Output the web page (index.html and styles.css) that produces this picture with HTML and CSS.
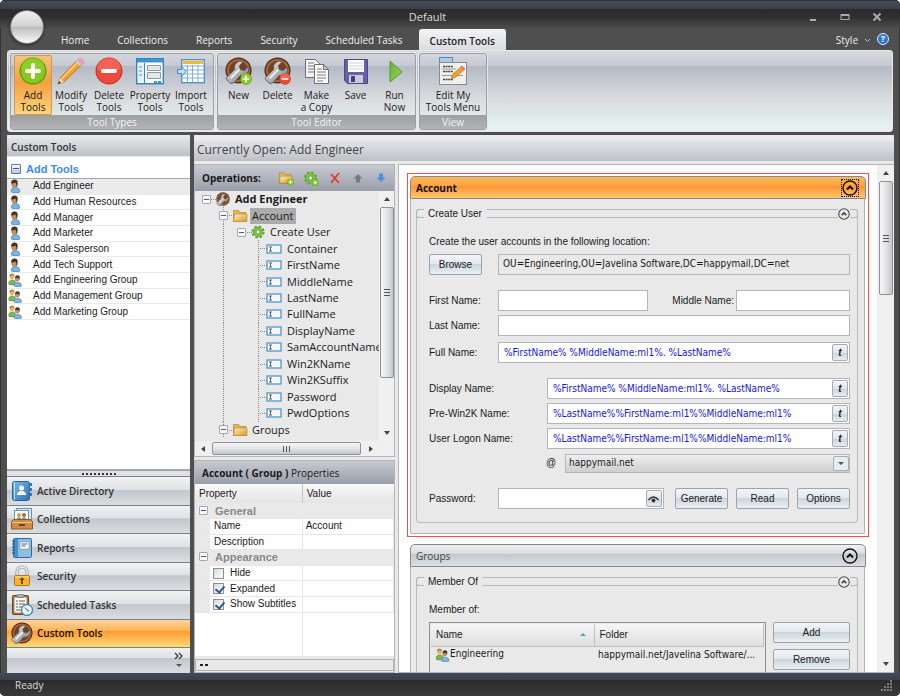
FILE: index.html
```
<!DOCTYPE html>
<html lang="en">
<head>
  <meta charset="UTF-8">
  <meta name="viewport" content="width=device-width, initial-scale=1.0">
  <title>Default</title>
  <link rel="stylesheet" href="styles.css">
</head>
<body>
  <!-- icon sprite -->
  <svg class="sprite" width="0" height="0" aria-hidden="true">
    <defs>
      <linearGradient id="gFolder" x1="0" y1="0" x2="1" y2="1"><stop offset="0" stop-color="#fff0b8"/><stop offset="1" stop-color="#d99a2b"/></linearGradient>
      <linearGradient id="gSteel" x1="0" y1="0" x2="1" y2="1"><stop offset="0" stop-color="#f6f6f6"/><stop offset="1" stop-color="#6f747a"/></linearGradient>
      <linearGradient id="gBook" x1="0" y1="0" x2="1" y2="1"><stop offset="0" stop-color="#7db9e8"/><stop offset="1" stop-color="#2f72b4"/></linearGradient>
      <linearGradient id="gPlay" x1="0" y1="0" x2="1" y2="1"><stop offset="0" stop-color="#5fb33a"/><stop offset="1" stop-color="#a5d24c"/></linearGradient>
      <symbol id="plus" viewBox="0 0 28 28">
        <circle cx="14" cy="14" r="13.5" fill="#4f9a10"/><circle cx="14" cy="14" r="12.3" fill="#86c81e"/>
        <path d="M2 12a12 12 0 0 1 24 0q-12 5-24 0z" fill="#9ad430" opacity=".5"/>
        <path d="M14 8v12M8 14h12" stroke="#fff" stroke-width="4" stroke-linecap="round"/>
      </symbol>
      <symbol id="minus" viewBox="0 0 28 28">
        <circle cx="14" cy="14" r="13.5" fill="#c8372c"/><circle cx="14" cy="14" r="12.3" fill="#ee4a3c"/>
        <path d="M2 12a12 12 0 0 1 24 0q-12 5-24 0z" fill="#f77a6c" opacity=".5"/>
        <path d="M8 14h12" stroke="#fff" stroke-width="4" stroke-linecap="round"/>
      </symbol>
      <symbol id="pencil" viewBox="0 0 28 28">
        <path d="M1 27l2-6L21 2.500q3-2 5 1t0 3L7 25z" fill="#f0a030" stroke="#b8701a" stroke-width=".8"/>
        <path d="M4.500 22L21 5" stroke="#ffd27a" stroke-width="1.600"/>
        <path d="M20 3.500l1.500-2q3-1.500 5 1t-.5 4.500l-2 1z" fill="#e3a5b8"/>
        <path d="M18.500 5l1.500-1.500 4.500 4-1.500 1.500z" fill="#c9ced6"/>
        <path d="M1 27l2-6 4 4z" fill="#f2d9ae"/><path d="M1 27l1-3 2 2z" fill="#333"/>
      </symbol>
      <symbol id="props" viewBox="0 0 28 28">
        <rect x=".7" y="1.700" width="26.600" height="25" fill="#fff" stroke="#2f86c4" stroke-width="1.400"/>
        <rect x="1" y="2" width="26" height="3.500" fill="#3f95d2"/>
        <rect x="2" y="7" width="6" height="18" fill="#e6f1f8"/><path d="M8.500 6v20" stroke="#2f86c4"/>
        <path d="M3 10h3M3 14h3M3 18h3" stroke="#3f95d2"/>
        <path d="M11.500 8.500h13v5h-13zM11.500 15.500h13v6h-13z" fill="#e4e6e9" stroke="#8d99a5"/>
        <path d="M18 24h3v2h-3zM22 24h3v2h-3z" fill="#3f95d2"/>
      </symbol>
      <symbol id="import" viewBox="0 0 28 28">
        <rect x="4.700" y="2.700" width="22.600" height="23" fill="#fff" stroke="#4a97cc" stroke-width="1.400"/>
        <rect x="6" y="4" width="20" height="3" fill="#f6b733"/>
        <path d="M5 9h22M5 13h22M5 17h22M5 21h22M10.500 8v17M15.500 8v17M21 8v17" stroke="#7fb2d6" stroke-width="1"/>
        <path d="M.5 12.500h4V9.500l4.500 5-4.500 5v-3h-4z" fill="#bde0f5" stroke="#3b8cc6"/>
      </symbol>
      <symbol id="wrench" viewBox="0 0 28 28">
        <circle cx="14" cy="14" r="13.500" fill="#5b2e14"/><circle cx="14" cy="14" r="12" fill="#a8683a"/><circle cx="14" cy="14" r="10" fill="#74401f"/>
        <path d="M3 25l-2-3 9-9q-1-5 2-7 3-3 7-1l-4 4 1 4 4 1 4-4q2 5-2 8-2 2-6 1l-7 8q-3 2-6-2z" fill="url(#gSteel)" stroke="#4b4f54" stroke-width=".8"/>
        <path d="M6 22l9-9" stroke="#fff" stroke-width="1.500"/>
      </symbol>
      <symbol id="tool-new" viewBox="0 0 28 28"><use href="#wrench" width="27" height="27"/><use href="#plus" x="15" y="16" width="12" height="12"/></symbol>
      <symbol id="tool-del" viewBox="0 0 28 28"><use href="#wrench" width="27" height="27"/><use href="#minus" x="15" y="16" width="12" height="12"/></symbol>
      <symbol id="copy" viewBox="0 0 28 28">
        <path d="M2.500 2.500h10l5 5v13h-15z" fill="#f4f4f4" stroke="#6f6f6f"/>
        <path d="M5 6h6M5 9h9M5 12h9M5 15h9" stroke="#777"/>
        <path d="M11.500 7.500h9l5 5v14h-14z" fill="#fdfdfd" stroke="#6f6f6f"/><path d="M20.500 7.500v5h5z" fill="#ccc" stroke="#6f6f6f"/>
        <path d="M14 12h5M14 15h9M14 18h9M14 21h9M14 24h6" stroke="#777"/>
      </symbol>
      <symbol id="save" viewBox="0 0 28 28">
        <path d="M2.500 2.500h23v24h-20l-3-3z" fill="#6660ae" stroke="#4b4690"/>
        <rect x="6" y="3" width="16" height="12" fill="#fff"/><path d="M7 6h14M7 9h14M7 12h14" stroke="#cfd0dc"/>
        <rect x="7" y="18" width="14" height="8" fill="#c9cbd6"/><rect x="9" y="19" width="4" height="6" fill="#454079"/>
      </symbol>
      <symbol id="run" viewBox="0 0 28 28"><path d="M9 4l12 11L9 25z" fill="url(#gPlay)" stroke="#4f9a2e"/></symbol>
      <symbol id="editmenu" viewBox="0 0 28 28">
        <rect x=".5" y=".5" width="13" height="5" fill="#a9cfe6" stroke="#4d8fb8"/>
        <rect x=".5" y="5.500" width="27" height="22" fill="#efefec" stroke="#8a8a8a"/>
        <path d="M4 9.500h10M4 14.500h10M4 22.500h10" stroke="#444" stroke-width="1.400" stroke-dasharray="2 .6"/><path d="M3 12h14M3 18.500h21" stroke="#999"/>
        <path d="M12 22l2-5 9-8 3 3-9 8z" fill="#f0a030" stroke="#b8701a" stroke-width=".7"/><path d="M21 10.500l2-2 3.500 3-2 2z" fill="#e77d7d"/>
      </symbol>
      <symbol id="user" viewBox="0 0 14 16">
        <path d="M3 15q-1-5 4-5.500 6 .5 5.500 5.500-5 2-9.500 0z" fill="#79b5e0" stroke="#3d7fb5" stroke-width=".7"/>
        <ellipse cx="6" cy="6" rx="3.200" ry="3.900" fill="#c98d55"/>
        <path d="M2.500 5q0-4.500 4-4.500T10 5q0 3-1.500 4.500.5-4-1-5.500-2 1-5 1z" fill="#3a3330"/>
      </symbol>
      <symbol id="group" viewBox="0 0 16 16">
        <path d="M1 13q-1-5 4-5 4 0 4 5-4 1.500-8 0z" fill="#7db84e" stroke="#4b8a2a" stroke-width=".6"/>
        <circle cx="4.500" cy="4.500" r="2.800" fill="#e3b57e"/><path d="M1.500 4q0-3.500 3-3.500t3 3q-3-1-6 .5z" fill="#b98a3c"/>
        <path d="M7 15q-.5-4.500 4-4.500t4.500 4.500q-4 1.500-8.500 0z" fill="#79b5e0" stroke="#3d7fb5" stroke-width=".6"/>
        <circle cx="10.500" cy="7" r="2.600" fill="#c98d55"/><path d="M8 6q0-3.500 3-3.500t2.500 5q-1-3-5.500-1.500z" fill="#3a3330"/>
      </symbol>
      <symbol id="book" viewBox="0 0 22 22">
        <rect x="1.500" y="1.500" width="17" height="19" rx="2" fill="url(#gBook)" stroke="#2a639c"/><path d="M3.500 2v18" stroke="#b4d6ef"/>
        <path d="M19 3h2v3h-2zM19 8h2v3h-2zM19 13h2v3h-2z" fill="#3b79b5"/>
        <circle cx="10.500" cy="8" r="2.500" fill="#fff"/><path d="M6 15q0-4 4.500-4t4.500 4z" fill="#fff"/>
      </symbol>
      <symbol id="drawer" viewBox="0 0 22 22">
        <rect x="5.500" y=".5" width="15" height="13" fill="#dbe8f2" stroke="#6a91b0"/><rect x="3.500" y="2.500" width="14" height="12" fill="#fff" stroke="#6a91b0"/>
        <circle cx="8" cy="7" r="2" fill="#cf9a58"/><circle cx="13" cy="7" r="2" fill="#a06c3a"/><path d="M5 13q1-4 3-4t3 4z" fill="#6cae45"/><path d="M10 13q1-4 3-4t3 4z" fill="#5f9fd0"/>
        <path d="M.5 13.500l2-2h17l2 2v7.500H.5z" fill="#d18b45" stroke="#8f5a22"/><path d="M1 14.500h20" stroke="#f2c288"/><rect x="8" y="16" width="6" height="2" fill="#6f4315"/>
      </symbol>
      <symbol id="report" viewBox="0 0 22 22">
        <rect x="2.500" y="1.500" width="18" height="19" rx="1" fill="#8fbfe0" stroke="#2f6a9e"/><rect x="3" y="2" width="4" height="18" fill="#4a8fc6"/>
        <path d="M1 4h3M1 7h3M1 10h3M1 13h3M1 16h3" stroke="#24527d"/>
        <rect x="9" y="5" width="9" height="7" fill="#fff" stroke="#6a91b0" stroke-width=".6"/><path d="M10.500 7h6M10.500 9h4" stroke="#567"/>
      </symbol>
      <symbol id="lock" viewBox="0 0 22 22">
        <path d="M6 11V7q0-5 5-5t5 5v4" fill="none" stroke="#8c9095" stroke-width="3"/><path d="M6 11V7q0-5 5-5t5 5v4" fill="none" stroke="#dfe2e5" stroke-width="1.800"/>
        <rect x="3.500" y="10.500" width="15" height="10" rx="1" fill="#f7b32b" stroke="#b8761a"/><path d="M4 12h14" stroke="#ffe08a"/>
        <path d="M11 12l3 3h-2v4h-2v-4H8z" fill="#7a4a10"/>
      </symbol>
      <symbol id="clip" viewBox="0 0 22 22">
        <rect x="1.500" y="1.500" width="16" height="19" rx="1" fill="#a87443" stroke="#6d4520"/><rect x="3.500" y="3.500" width="12" height="15" fill="#fff"/>
        <rect x="6" y=".5" width="7" height="3" rx="1" fill="#aab0b6" stroke="#666" stroke-width=".6"/>
        <path d="M5 7h2M8 7h6M5 10h2M8 10h6M5 13h2M8 13h4M5 16h5" stroke="#555"/>
        <circle cx="16" cy="16" r="5.500" fill="#eaf4fb" stroke="#3d85bd" stroke-width="1.300"/><path d="M14 13.500l2 2.500 2 1" stroke="#555" fill="none"/>
      </symbol>
      <symbol id="folder" viewBox="0 0 16 14">
        <path d="M1.500 12.500v-11h5l1.500 2h6v9z" fill="#e9b64d" stroke="#a97820" stroke-width=".6"/><path d="M1.500 12.500l1-7.500h12.500v7.500z" fill="url(#gFolder)" stroke="#b5842b" stroke-width=".6"/>
      </symbol>
      <symbol id="folder-add" viewBox="0 0 16 14"><use href="#folder" width="15" height="13"/><use href="#plus" x="9" y="7" width="7" height="7"/></symbol>
      <symbol id="gear" viewBox="0 0 16 16">
        <circle cx="8" cy="8" r="6" fill="none" stroke="#5fa532" stroke-width="3" stroke-dasharray="2.600 2.110"/>
        <circle cx="8" cy="8" r="5.500" fill="#7cc142" stroke="#5fa532" stroke-width=".7"/><circle cx="8" cy="8" r="2.300" fill="#eee" stroke="#4e962a" stroke-width=".7"/>
      </symbol>
      <symbol id="gear-add" viewBox="0 0 16 16"><use href="#gear" width="15" height="15"/><use href="#plus" x="9" y="9" width="7" height="7"/></symbol>
      <symbol id="cross" viewBox="0 0 12 12"><path d="M2 2l8 9M10 1L2 11" stroke="#e8382a" stroke-width="1.800" fill="none"/></symbol>
      <symbol id="up" viewBox="0 0 12 12"><path d="M6 2l4.500 4.500h-2.500v4h-4v-4H1.500z" fill="#777b80"/></symbol>
      <symbol id="down" viewBox="0 0 12 12"><path d="M6 10L1.500 5.500h2.500v-4h4v4h2.500z" fill="#4f8fe0"/></symbol>
      <symbol id="field" viewBox="0 0 16 10"><rect x="1" y="1" width="14" height="8" fill="#f6f6f6" stroke="#4b9bd0" stroke-width="1.300"/><path d="M3 3h3M3 7h3M4.500 3v4" stroke="#555" stroke-width=".9"/></symbol>
      <symbol id="collapse" viewBox="0 0 16 16"><circle cx="8" cy="8" r="7" fill="none" stroke="currentColor" stroke-width="1.400"/><path d="M5 9.500l3-3 3 3" fill="none" stroke="currentColor" stroke-width="2"/></symbol>
      <symbol id="eye" viewBox="0 0 12 10"><path d="M1 6q5-6 10 0" fill="none" stroke="#333" stroke-width="1.400"/><circle cx="6" cy="6.500" r="1.900" fill="#333"/></symbol>
    </defs>
  </svg>

  <div class="window">
    <header class="titlebar">
      <h1>Default</h1>
      <div class="winbtns">
        <button aria-label="Minimize"><svg width="12" height="12"><path d="M3 9h6" stroke="#a9adb3" stroke-width="2"/></svg></button>
        <button aria-label="Maximize"><svg width="12" height="12"><rect x="2" y="3.500" width="8" height="5" fill="none" stroke="#a9adb3"/><path d="M2 4h8" stroke="#a9adb3" stroke-width="2"/></svg></button>
        <button aria-label="Close"><svg width="12" height="12"><path d="M2.500 2.500l7 7M9.500 2.500l-7 7" stroke="#a9adb3" stroke-width="2"/></svg></button>
      </div>
    </header>
    <button class="orb" aria-label="Application menu"></button>

    <nav class="tabs">
      <a href="#">Home</a>
      <a href="#">Collections</a>
      <a href="#">Reports</a>
      <a href="#">Security</a>
      <a href="#">Scheduled Tasks</a>
      <a href="#" class="active">Custom Tools</a>
      <div class="tabs-right">
        <button class="style-btn">Style
          <svg width="7" height="5"><path d="M1 1l2.500 2.500L6 1" fill="none" stroke="#bbb"/></svg>
        </button>
        <button class="help" aria-label="Help">?</button>
      </div>
    </nav>

    <section class="ribbon">
      <div class="group">
        <div class="group-btns">
          <button class="rb on"><svg><use href="#plus"/></svg><span>Add<br>Tools</span></button>
          <button class="rb"><svg><use href="#pencil"/></svg><span>Modify<br>Tools</span></button>
          <button class="rb"><svg><use href="#minus"/></svg><span>Delete<br>Tools</span></button>
          <button class="rb wide"><svg><use href="#props"/></svg><span>Property<br>Tools</span></button>
          <button class="rb"><svg><use href="#import"/></svg><span>Import<br>Tools</span></button>
        </div>
        <div class="group-name">Tool Types</div>
      </div>
      <div class="group">
        <div class="group-btns">
          <button class="rb"><svg><use href="#tool-new"/></svg><span>New</span></button>
          <button class="rb"><svg><use href="#tool-del"/></svg><span>Delete</span></button>
          <button class="rb"><svg><use href="#copy"/></svg><span>Make<br>a Copy</span></button>
          <button class="rb"><svg><use href="#save"/></svg><span>Save</span></button>
          <button class="rb"><svg><use href="#run"/></svg><span>Run<br>Now</span></button>
        </div>
        <div class="group-name">Tool Editor</div>
      </div>
      <div class="group">
        <div class="group-btns">
          <button class="rb widest"><svg><use href="#editmenu"/></svg><span>Edit My<br>Tools Menu</span></button>
        </div>
        <div class="group-name">View</div>
      </div>
    </section>

    <main class="main">
      <aside class="sidebar">
        <h2 class="side-title">Custom Tools</h2>
        <div class="side-group"><button class="box blue" aria-label="Collapse"></button>Add Tools</div>
        <ul class="tools">
          <li class="sel"><svg><use href="#user"/></svg><a href="#">Add Engineer</a></li>
          <li><svg><use href="#user"/></svg><a href="#">Add Human Resources</a></li>
          <li><svg><use href="#user"/></svg><a href="#">Add Manager</a></li>
          <li><svg><use href="#user"/></svg><a href="#">Add Marketer</a></li>
          <li><svg><use href="#user"/></svg><a href="#">Add Salesperson</a></li>
          <li><svg><use href="#user"/></svg><a href="#">Add Tech Support</a></li>
          <li><svg><use href="#group"/></svg><a href="#">Add Engineering Group</a></li>
          <li><svg><use href="#group"/></svg><a href="#">Add Management Group</a></li>
          <li><svg><use href="#group"/></svg><a href="#">Add Marketing Group</a></li>
        </ul>
        <div class="grip"><span></span></div>
        <nav class="sections">
          <a href="#"><svg><use href="#book"/></svg>Active Directory</a>
          <a href="#"><svg><use href="#drawer"/></svg>Collections</a>
          <a href="#"><svg><use href="#report"/></svg>Reports</a>
          <a href="#"><svg><use href="#lock"/></svg>Security</a>
          <a href="#"><svg><use href="#clip"/></svg>Scheduled Tasks</a>
          <a href="#" class="active"><svg><use href="#wrench"/></svg>Custom Tools</a>
        </nav>
        <div class="side-foot">
          <svg width="10" height="16"><path d="M1 1l3 3-3 3M5 1l3 3-3 3" fill="none" stroke="#333" stroke-width="1.200"/><path d="M2 12h6l-3 3z" fill="#555"/></svg>
        </div>
      </aside>

      <section class="content">
        <h2 class="open-title">Currently Open: Add Engineer</h2>
        <div class="split">
          <div class="left-col">
            <div class="pane">
              <div class="pane-head ops">
                <b>Operations:</b>
                <button aria-label="Add folder"><svg><use href="#folder-add"/></svg></button>
                <button aria-label="Add operation"><svg><use href="#gear-add"/></svg></button>
                <button aria-label="Delete"><svg><use href="#cross"/></svg></button>
                <button aria-label="Move up"><svg><use href="#up"/></svg></button>
                <button aria-label="Move down"><svg><use href="#down"/></svg></button>
              </div>
              <div class="tree-wrap">
                <ul class="tree">
                  <li class="d0"><i class="box"></i><svg><use href="#wrench"/></svg><b>Add Engineer</b></li>
                  <li class="d1"><i class="box"></i><svg><use href="#folder"/></svg><span class="picked">Account</span></li>
                  <li class="d2"><i class="box"></i><svg><use href="#gear"/></svg><span>Create User</span></li>
                  <li class="d3"><svg><use href="#field"/></svg><span>Container</span></li>
                  <li class="d3"><svg><use href="#field"/></svg><span>FirstName</span></li>
                  <li class="d3"><svg><use href="#field"/></svg><span>MiddleName</span></li>
                  <li class="d3"><svg><use href="#field"/></svg><span>LastName</span></li>
                  <li class="d3"><svg><use href="#field"/></svg><span>FullName</span></li>
                  <li class="d3"><svg><use href="#field"/></svg><span>DisplayName</span></li>
                  <li class="d3"><svg><use href="#field"/></svg><span>SamAccountName</span></li>
                  <li class="d3"><svg><use href="#field"/></svg><span>Win2KName</span></li>
                  <li class="d3"><svg><use href="#field"/></svg><span>Win2KSuffix</span></li>
                  <li class="d3"><svg><use href="#field"/></svg><span>Password</span></li>
                  <li class="d3"><svg><use href="#field"/></svg><span>PwdOptions</span></li>
                  <li class="d1"><i class="box"></i><svg><use href="#folder"/></svg><span>Groups</span></li>
                </ul>
                <div class="vbar tree-vbar"><i class="arr n"></i><i class="thumb"></i><i class="arr s"></i></div>
              </div>
              <div class="hbar"><i class="arr w"></i><i class="thumb"></i><i class="arr e"></i></div>
            </div>

            <div class="pane props">
              <div class="pane-head"><span><b>Account ( Group )</b> Properties</span></div>
              <table class="prop-table">
                <thead><tr><th>Property</th><th>Value</th></tr></thead>
                <tbody>
                  <tr class="cat"><td colspan="2"><i class="box"></i>General</td></tr>
                  <tr><td>Name</td><td>Account</td></tr>
                  <tr><td>Description</td><td></td></tr>
                  <tr class="cat"><td colspan="2"><i class="box"></i>Appearance</td></tr>
                  <tr><td class="chk"><label><input type="checkbox">Hide</label></td><td></td></tr>
                  <tr><td class="chk"><label><input type="checkbox" checked>Expanded</label></td><td></td></tr>
                  <tr><td class="chk"><label><input type="checkbox" checked>Show Subtitles</label></td><td></td></tr>
                </tbody>
              </table>
              <div class="prop-rest"></div>
              <div class="prop-hint"><i></i><i></i></div>
            </div>
          </div>

          <div class="editor">
            <div class="editor-scroll">
              <div class="current">
                <article class="card">
                  <h3 class="card-head hot">Account<button aria-label="Collapse Account"><svg><use href="#collapse"/></svg></button></h3>
                  <div class="card-body">
                    <form class="frame">
                      <div class="legend"><i class="cap l"></i><span>Create User</span><i class="rule"></i><button type="button" aria-label="Collapse"><svg><use href="#collapse"/></svg></button><i class="cap r"></i></div>
                      <p class="note">Create the user accounts in the following location:</p>
                      <div class="row end">
                        <div class="lab"><button type="button" class="btn">Browse</button></div>
                        <input class="inp ro" type="text" aria-label="Location" readonly value="OU=Engineering,OU=Javelina Software,DC=happymail,DC=net">
                      </div>
                      <div class="row">
                        <label class="lab" for="first">First Name:</label>
                        <input class="inp" id="first" type="text">
                        <label class="mid" for="middle">Middle Name:</label>
                        <input class="inp short" id="middle" type="text">
                      </div>
                      <div class="row">
                        <label class="lab" for="last">Last Name:</label>
                        <input class="inp" id="last" type="text">
                      </div>
                      <div class="row end">
                        <label class="lab" for="full">Full Name:</label>
                        <div class="inp combo"><input id="full" type="text" value="%FirstName% %MiddleName:ml1%. %LastName%"><button type="button">t</button></div>
                      </div>
                      <div class="row">
                        <label class="lab long" for="display">Display Name:</label>
                        <div class="inp combo"><input id="display" type="text" value="%FirstName% %MiddleName:ml1%. %LastName%"><button type="button">t</button></div>
                      </div>
                      <div class="row">
                        <label class="lab long" for="prewin">Pre-Win2K Name:</label>
                        <div class="inp combo"><input id="prewin" type="text" value="%LastName%%FirstName:ml1%%MiddleName:ml1%"><button type="button">t</button></div>
                      </div>
                      <div class="row">
                        <label class="lab long" for="logon">User Logon Name:</label>
                        <div class="inp combo"><input id="logon" type="text" value="%LastName%%FirstName:ml1%%MiddleName:ml1%"><button type="button">t</button></div>
                      </div>
                      <div class="row end domain">
                        <label class="at" for="domain">@</label>
                        <div class="sel-wrap">
                          <select id="domain"><option>happymail.net</option></select>
                          <i class="drop"></i>
                        </div>
                      </div>
                      <div class="row">
                        <label class="lab" for="pwd">Password:</label>
                        <div class="inp combo pwd"><input id="pwd" type="password"><button type="button" aria-label="Show password"><svg><use href="#eye"/></svg></button></div>
                        <div class="btns">
                          <button type="button" class="btn">Generate</button>
                          <button type="button" class="btn">Read</button>
                          <button type="button" class="btn">Options</button>
                        </div>
                      </div>
                    </form>
                  </div>
                </article>
              </div>

              <article class="card groups">
                <h3 class="card-head">Groups<button aria-label="Collapse Groups"><svg><use href="#collapse"/></svg></button></h3>
                <div class="card-body">
                  <div class="frame">
                    <div class="legend"><i class="cap l"></i><span>Member Of</span><i class="rule"></i><button aria-label="Collapse"><svg><use href="#collapse"/></svg></button><i class="cap r"></i></div>
                    <p class="note">Member of:</p>
                    <div class="members">
                      <div class="list">
                        <table>
                          <thead><tr><th>Name<i class="sort"></i></th><th>Folder</th></tr></thead>
                          <tbody><tr><td><svg><use href="#group"/></svg>Engineering</td><td>happymail.net/Javelina Software/...</td></tr></tbody>
                        </table>
                      </div>
                      <div class="list-btns">
                        <button class="btn">Add</button>
                        <button class="btn">Remove</button>
                      </div>
                    </div>
                  </div>
                </div>
              </article>
            </div>
            <div class="vbar editor-vbar"><i class="arr n"></i><i class="thumb"></i><i class="arr s"></i></div>
          </div>
        </div>
      </section>
    </main>

    <footer class="status">Ready
      <svg width="12" height="12"><path d="M10 2h2M7 5h2M10 5h2M4 8h2M7 8h2M10 8h2M1 11h2M4 11h2M7 11h2M10 11h2" stroke="#999" stroke-width="1.500"/></svg>
    </footer>
  </div>
</body>
</html>
```
FILE: styles.css
```
* {
  box-sizing: border-box;
}
body {
  margin: 0;
  background: #fff;
  font-family: "Open Sans", "Noto Sans", sans-serif;
  font-size: 10px;
  line-height: 12px;
  color: #1a1a1a;
}
h1, h2, h3, p, ul {
  margin: 0;
  padding: 0;
  font-size: 10px;
  font-weight: normal;
}
ul {
  list-style: none;
}
a {
  color: inherit;
  text-decoration: none;
}
button {
  padding: 0;
  border: 0;
  background: none;
  font: inherit;
  color: inherit;
}
input, select {
  font: inherit;
  color: inherit;
}
i {
  font-style: normal;
}
svg {
  display: block;
  flex: none;
}
.sprite {
  position: absolute;
}

/* Window frame */
.window {
  position: relative;
  display: flex;
  flex-direction: column;
  height: 100vh;
  overflow: hidden;
  border-radius: 5px;
  background: #4f4f4f;
  box-shadow: inset 0 0 0 1px #333;
}
.titlebar {
  display: flex;
  align-items: center;
  height: 28px;
  padding: 6px 17px 0 0;
  background: linear-gradient(#333 0 1px, #444958 1px, #3b404d 9px, #2b2b2b 9px, #303030 17px, #4b4b4b);
  color: #ddd;
}
.titlebar h1 {
  flex: 1;
  padding-left: 48px;
  text-align: center;
  font-size: 11px;
}
.winbtns {
  display: flex;
  gap: 20px;
}
.orb {
  position: absolute;
  left: 10px;
  top: 10px;
  width: 34px;
  height: 34px;
  border: 1px solid #777;
  border-radius: 50%;
  background: linear-gradient(#f0f0f0, #d2d2d2 47%, #bcbcbc 50%, #fafafa);
  box-shadow: 0 1px 3px #222;
}

/* Tabs */
.tabs {
  display: flex;
  height: 22px;
  padding-left: 47px;
  color: #eee;
}
.tabs a {
  padding: 0 14px;
  line-height: 25px;
}
.tabs .active {
  margin: 1px 0 0 2px;
  padding: 0 11px;
  border-radius: 3px 3px 0 0;
  background: linear-gradient(#f4f4f4, #d9dce0);
  color: #222;
  line-height: 24px;
  font-weight: 600;
}
.tabs-right {
  display: flex;
  align-items: center;
  gap: 6px;
  margin-left: auto;
  padding-right: 11px;
}
.style-btn {
  display: flex;
  align-items: center;
  gap: 6px;
  padding-top: 2px;
}
.help {
  width: 12px;
  height: 12px;
  border: 1px solid #dfe9f5;
  border-radius: 50%;
  background: #2f74d0;
  color: #fff;
  line-height: 10px;
  font-size: 9px;
  font-weight: 700;
}

/* Ribbon */
.ribbon {
  display: flex;
  gap: 3px;
  margin: 0 7px;
  padding: 2px 2px 1px;
  border: 1px solid #e8e8e8;
  border-radius: 3px;
  height: 82px;
  background: linear-gradient(#d8dadd, #c5c9d2 15px, #b3b9c5 15px, #d8dadd 46px, #e7f1f2 76px);
}
.group {
  display: flex;
  flex-direction: column;
  border: 1px solid #9b9fa5;
  border-radius: 3px;
  box-shadow: 0 0 0 1px #e6e8ea;
  overflow: hidden;
}
.group-btns {
  display: flex;
  flex: 1;
  min-height: 0;
  padding: 1px 3px 0;
}
.group-name {
  height: 14px;
  background: linear-gradient(#9d9fa1, #b2b3b4);
  color: #f4f4f4;
  line-height: 14px;
  text-align: center;
}
.rb {
  display: flex;
  flex-direction: column;
  align-items: center;
  justify-content: flex-start;
  gap: 4px;
  width: 38px;
  padding-top: 2px;
  border-radius: 2px;
  white-space: nowrap;
}
.rb svg {
  width: 28px;
  height: 28px;
}
.group:nth-child(2) .group-btns {
  padding: 1px 1px 0;
}
.group:nth-child(2) .rb {
  width: 39px;
}
.rb.wide {
  width: 44px;
}
.rb.widest {
  width: 60px;
}
.rb.on {
  background: linear-gradient(#f6c47c, #f5a03f 45%, #ffd67c);
  box-shadow: inset 0 0 0 1px #c9995c;
}

/* Main area */
.main {
  display: flex;
  flex: 1;
  gap: 4px;
  min-height: 0;
  margin: 3px 6px 0 7px;
}
.sidebar {
  display: flex;
  flex-direction: column;
  width: 183px;
  background: #fff;
}
.side-title {
  height: 22px;
  padding-left: 4px;
  background: linear-gradient(#e9ebed, #bcc1c7);
  border-bottom: 1px solid #e8e8e8;
  line-height: 25px;
  font-weight: 600;
  color: #333;
}
.side-group {
  display: flex;
  align-items: center;
  gap: 5px;
  height: 22px;
  padding: 3px 4px 0;
  border-bottom: 1px solid #a6a6a6;
  color: #3d8bf0;
  font: 700 11px "Liberation Sans", Arial, sans-serif;
}
.box {
  position: relative;
  display: block;
  flex: none;
  width: 9px;
  height: 9px;
  border: 1px solid #a4a9b0;
  border-radius: 1px;
  background: #fbfbfb;
}
.box::after {
  content: "";
  position: absolute;
  left: 1px;
  right: 1px;
  top: 3px;
  height: 1px;
  background: #3b5da8;
}
.box.blue {
  width: 10px;
  height: 10px;
  border-color: #5d76a5;
  background: linear-gradient(#fff, #b9c4d8);
}
.tools {
  display: grid;
  grid-auto-rows: 1fr;
  height: 141px;
  font-family: "Liberation Sans", Arial, sans-serif;
}
.tools li {
  display: flex;
  align-items: center;
  border-bottom: 1px solid #e9e9e9;
}
.tools .sel {
  background: #ebebeb;
}
.tools svg {
  width: 16px;
  height: 14px;
  margin-right: 10px;
}
.grip {
  display: flex;
  justify-content: center;
  align-items: center;
  height: 8px;
  margin-top: auto;
  border-top: 2px solid #a3a6ad;
  border-bottom: 1px solid #7c828c;
  background: #dfe1e5;
}
.grip span {
  width: 34px;
  border-top: 2px dotted #333;
}
.sections {
  display: grid;
  grid-auto-rows: 1fr;
  height: 171px;
  color: #333;
  font-weight: 600;
}
.sections a {
  display: flex;
  align-items: center;
  gap: 4px;
  padding-left: 4px;
  border-bottom: 1px solid #7b818b;
  background: linear-gradient(#eff1f2, #dfe2e5 45%, #c3c7cd 47%, #dadde0);
}
.sections svg {
  width: 22px;
  height: 22px;
}
.sections .active {
  background: linear-gradient(#ffd29b, #ffb65c 38%, #ff9c33 42%, #ffda75);
  color: #111;
}
.side-foot {
  display: flex;
  justify-content: flex-end;
  height: 25px;
  padding: 4px 6px 0;
  background: linear-gradient(#eff1f2, #dfe2e5 40%, #c3c7cd 42%, #dadde0);
}

.content {
  display: flex;
  flex: 1;
  flex-direction: column;
  min-width: 0;
  background: #e9e9e9;
}
.open-title {
  height: 26px;
  padding-left: 3px;
  background: linear-gradient(#ededed 4px, #e2e4e7 6px, #bdc1c7);
  line-height: 30px;
  font-size: 12px;
  color: #444;
}
.split {
  display: flex;
  flex: 1;
  gap: 3px;
  min-height: 0;
  padding-top: 3px;
}
.left-col {
  display: flex;
  flex-direction: column;
  gap: 3px;
  width: 201px;
}
.pane {
  border: 1px solid #b4b5b8;
  background: #e9e9e9;
}
.pane-head {
  display: flex;
  align-items: center;
  height: 23px;
  padding-left: 7px;
  background: linear-gradient(#c8cad1, #989eaa);
}
.ops {
  height: 26px;
}
.ops b {
  width: 71px;
}
.ops button {
  width: 23px;
}
.ops button svg {
  width: 12px;
  height: 12px;
  margin: auto;
}
.ops button:nth-of-type(-n+2) {
  width: 25px;
}
.ops button:nth-of-type(-n+2) svg {
  width: 16px;
  height: 15px;
}

/* Tree */
.tree-wrap {
  display: flex;
  height: 250px;
}
.tree {
  display: grid;
  flex: 1;
  grid-auto-rows: 1fr;
  min-width: 0;
  height: 247px;
  overflow: hidden;
  font-size: 11px;
}
.tree li {
  --dots: repeating-linear-gradient(#888 0 1px, transparent 1px 2px);
  --dash: repeating-linear-gradient(90deg, #888 0 1px, transparent 1px 2px);
  display: flex;
  align-items: center;
  gap: 5px;
  white-space: nowrap;
  background-repeat: no-repeat;
}
.tree svg {
  width: 16px;
  height: 14px;
}
.tree b, .tree span {
  line-height: 16px;
}
.tree .box + svg {
  margin-left: -1px;
  margin-right: -1px;
}
.d0 {
  padding-left: 7px;
}
.d1 {
  padding-left: 24px;
}
.d2 {
  padding-left: 42px;
}
.d3 {
  padding-left: 71px;
}
.d0 {
  background-image: var(--dash);
  background-size: 8px 1px;
  background-position: 14px 8px;
}
.d1, .d2 {
  background-image: var(--dots), var(--dash);
  background-size: 1px 100%, 12px 1px;
  background-position: 28px 0, 28px 8px;
}
.d2 {
  background-position: 28px 0, 46px 8px;
}
.d3 {
  background-image: var(--dots), var(--dots), var(--dash);
  background-size: 1px 100%, 1px 100%, 10px 1px;
  background-position: 28px 0, 63px 0, 63px 8px;
}
.tree .picked {
  margin-left: -2px;
  padding: 0 2px;
  background: #ababab;
}

/* Scroll bars */
.vbar, .hbar {
  display: flex;
  align-items: center;
  flex: none;
  background: #f0f0f0;
}
.vbar {
  flex-direction: column;
  width: 15px;
  padding: 6px 0;
}
.hbar {
  height: 15px;
  padding: 0 21px 0 6px;
}
.thumb {
  border: 1px solid #8f9398;
  border-radius: 2px;
  display: flex;
  align-items: center;
  justify-content: center;
}
.thumb::after {
  content: "";
}
.vbar .thumb {
  width: 14px;
  background: linear-gradient(90deg, #f6f6f6, #e3e4e5 50%, #c2c4c7);
}
.vbar .thumb::after {
  width: 6px;
  height: 7px;
  background: repeating-linear-gradient(#555 0 1px, transparent 1px 3px);
}
.hbar .thumb {
  flex: 1;
  height: 13px;
  margin: 0 8px 0 7px;
  background: linear-gradient(#f6f6f6, #e3e4e5 50%, #c2c4c7);
}
.hbar .thumb::after {
  width: 7px;
  height: 6px;
  background: repeating-linear-gradient(90deg, #555 0 1px, transparent 1px 3px);
}
.tree-vbar .thumb {
  height: 171px;
  margin-top: 6px;
}
.editor-vbar {
  width: 17px;
}
.editor-vbar .thumb {
  height: 114px;
  margin-top: 6px;
}
.arr {
  border: 3px solid transparent;
}
.arr.n {
  border-top: 0;
  border-bottom: 4px solid #444;
}
.arr.s {
  margin-top: auto;
  border-bottom: 0;
  border-top: 4px solid #444;
}
.arr.w {
  border-left: 0;
  border-right: 4px solid #444;
}
.arr.e {
  border-right: 0;
  border-left: 4px solid #444;
}

/* Properties */
.props {
  display: flex;
  flex: 1;
  flex-direction: column;
  min-height: 0;
}
.props .pane-head {
  flex: none;
}
.prop-table {
  width: 100%;
  border-collapse: collapse;
  table-layout: fixed;
  background: #fff;
  font-family: "Liberation Sans", Arial, sans-serif;
}
.prop-table th {
  width: 54%;
  height: 19px;
  padding: 0 4px;
  border-right: 1px solid #c4c4c4;
  background: linear-gradient(#f8f8f8, #e4e4e4);
  text-align: left;
  font-weight: normal;
}
.prop-table th + th {
  width: 46%;
  border-right: 0;
}
.prop-table tbody {
  height: 109px;
}
.prop-table td {
  height: 15px;
  padding: 0 3px;
  border-bottom: 1px solid #e6e6e6;
  border-right: 1px solid #e6e6e6;
  line-height: 14px;
}
.prop-table td:first-child {
  padding-left: 19px;
  background: linear-gradient(90deg, #e9e9e9 15px, #fff 15px);
}
.prop-table .cat td {
  padding-left: 4px;
  background: #e9e9e9;
  color: #888;
  font-size: 11px;
  font-weight: 700;
}
.cat .box {
  display: inline-block;
  margin-right: 7px;
}
.prop-table label {
  display: flex;
  align-items: center;
  gap: 6px;
  margin-left: -1px;
}
.prop-table input {
  appearance: none;
  width: 11px;
  height: 11px;
  margin: 0;
  border: 1px solid #8c8f94;
  background: linear-gradient(135deg, #d5d9de, #fff);
}
.prop-table input:checked::after {
  content: "";
  display: block;
  width: 4px;
  height: 7px;
  margin-left: 3px;
  border: solid #3a5a8c;
  border-width: 0 2px 2px 0;
  transform: rotate(40deg);
}
.prop-rest {
  flex: 1;
  background: linear-gradient(90deg, #fff 107px, #e6e6e6 107px 108px, #fff 108px);
}
.prop-hint {
  display: flex;
  gap: 2px;
  align-items: center;
  height: 12px;
  margin: 3px 0 1px;
  padding-left: 4px;
  border: 1px solid #b0b0b0;
}
.prop-hint i {
  width: 3px;
  height: 2px;
  background: #222;
}

/* Editor */
.editor {
  display: flex;
  flex: 1;
  min-width: 0;
  border: 1px solid #b4b5b8;
  border-right: 0;
  background: #fff;
  font-family: "Liberation Sans", Arial, sans-serif;
}
.editor-scroll {
  flex: 1;
  min-width: 0;
  padding: 8px 8px 0;
  overflow: hidden;
}
.current {
  padding: 2px;
  border: 1px solid #ff4a4a;
}
.groups {
  margin: 7px 3px;
}
.card-head {
  display: flex;
  align-items: center;
  justify-content: space-between;
  height: 23px;
  padding: 0 7px 0 5px;
  border: 1px solid #85888f;
  border-radius: 5px 5px 0 0;
  background: linear-gradient(#eeeff1, #dcdfe2 40%, #c3c7cd 42%, #dcdfe2);
  font-family: "Open Sans", "Noto Sans", sans-serif;
  color: #444;
}
.card-head.hot {
  background: linear-gradient(#ffb95c, #ffa743 38%, #ff9436 44%, #ffc766);
  font-weight: 700;
  color: #111;
}
.card-head svg {
  width: 16px;
  height: 16px;
  color: #111;
}
.hot button {
  outline: 1px dotted #111;
}
.card-body {
  margin-right: 1px;
  padding: 10px 6px 10px 5px;
  border: 1px solid #b1b3b6;
  border-top: 0;
  border-radius: 0 0 2px 2px;
  background: #e9e9e9;
}
.frame {
  border: 1px solid #b9bbbd;
  border-top: 0;
  border-radius: 4px;
  padding: 0 7px 13px 12px;
}
.legend {
  display: flex;
  align-items: center;
  height: 9px;
  margin: 0 -8px 0 -13px;
}
.legend span {
  padding: 0 5px 0 4px;
}
.legend .rule {
  flex: 1;
  height: 9px;
  border: solid #b4b6b9;
  border-width: 1px 0;
}
.cap {
  width: 8px;
  height: 9px;
  border: 1px solid #b4b6b9;
}
.cap.l {
  border-right: 0;
  border-radius: 3px 0 0 3px;
}
.cap.r {
  border-left: 0;
  border-radius: 0 3px 3px 0;
}
.legend svg {
  width: 12px;
  height: 12px;
  color: #444;
}
.note {
  margin: 18px 0 6px;
}
.row {
  display: flex;
  align-items: center;
  height: 21px;
  margin-bottom: 4px;
}
.row.end {
  margin-bottom: 15px;
}
.row:nth-of-type(4) {
  margin-bottom: 6px;
}
.lab {
  width: 69px;
}
.long {
  width: 118px;
}
.mid {
  padding: 0 2px 0 24px;
}
.btn {
  height: 21px;
  min-width: 53px;
  border: 1px solid #9aa3ae;
  border-radius: 2px;
  background: linear-gradient(#f2f5f8, #e3e8ed 48%, #cdd5dc 50%, #e8f0f4);
}
.inp {
  flex: 1;
  min-width: 0;
  height: 21px;
  padding: 0 4px;
  border: 1px solid #b2b5b9;
  background: #fff;
}
.short {
  flex: none;
  width: 114px;
}
.ro, .combo input, select, .list td {
  font-family: "DejaVu Sans Condensed", "DejaVu Sans", sans-serif;
}
.ro {
  padding-bottom: 3px;
  background: #e9e9e9;
}
.combo {
  display: flex;
  align-items: center;
  padding: 0 1px 0 5px;
}
.combo input {
  flex: 1;
  min-width: 0;
  padding: 0;
  border: 0;
  background: none;
  color: #1212f0;
  outline: 0;
}
.combo button {
  width: 16px;
  height: 17px;
  border: 1px solid #a4adb7;
  border-radius: 2px;
  background: linear-gradient(#f2f5f8, #dfe5ea 50%, #cdd5dc 52%, #e4ecf0);
  font: italic 700 10px "Liberation Sans", Arial, sans-serif;
}
.combo button svg {
  width: 13px;
  height: 10px;
}
.at {
  margin-left: 117px;
  width: 19px;
}
.domain {
  height: 20px;
}
.sel-wrap {
  position: relative;
  flex: 1;
}
.sel-wrap select {
  appearance: none;
  display: block;
  width: 100%;
  height: 19px;
  padding: 0 3px;
  border: 1px solid #b2b5b9;
  border-radius: 0;
  background: linear-gradient(#efefef, #cfcfcf);
}
.drop {
  position: absolute;
  right: 1px;
  top: 2px;
  width: 16px;
  height: 15px;
  border: 1px solid #a4adb7;
  border-radius: 2px;
  background: #e6ecf0;
  pointer-events: none;
}
.drop::after {
  content: "";
  position: absolute;
  left: 4px;
  top: 5px;
  border: 3px solid transparent;
  border-top-color: #555;
  border-bottom: 0;
}
.btns {
  display: flex;
  gap: 8px;
  padding-left: 11px;
}
.row:last-child {
  margin-bottom: 0;
}

/* Members list */
.members {
  display: flex;
  gap: 7px;
}
.list {
  flex: 1;
  height: 120px;
  padding: 1px;
  border: 1px solid #8d9196;
}
.list table {
  width: 100%;
  border-collapse: collapse;
  table-layout: fixed;
}
.list th {
  height: 22px;
  padding: 0 5px;
  border-right: 1px solid #c0c0c0;
  border-bottom: 1px solid #c0c0c0;
  background: linear-gradient(#f6f6f6, #dedede);
  text-align: left;
  font-weight: normal;
}
.list th:first-child {
  width: 163px;
}
.list td {
  height: 18px;
  padding: 0 4px;
  white-space: nowrap;
}
.list td svg {
  float: left;
  width: 15px;
  height: 14px;
}
.sort {
  float: right;
  margin: 4px 3px;
  border: 3px solid transparent;
  border-top: 0;
  border-bottom-color: #5b9bc4;
}
.list-btns {
  display: flex;
  flex-direction: column;
  gap: 6px;
  width: 77px;
}

/* Status bar */
.status {
  display: flex;
  justify-content: space-between;
  align-items: flex-end;
  height: 23px;
  padding: 0 8px 5px 15px;
  background: linear-gradient(#444958, #3b404d 7px, #2b2b2b 7px, #3a3a3a);
  color: #ddd;
}
```
